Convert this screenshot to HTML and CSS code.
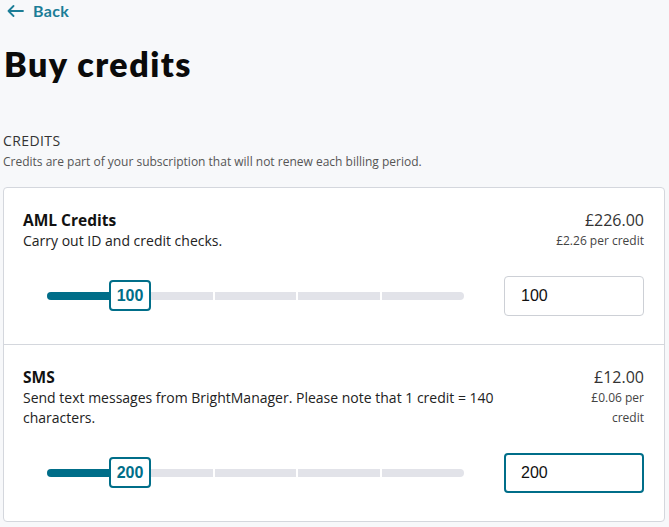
FILE: index.html
```html
<!DOCTYPE html>
<html lang="en">
<head>
<meta charset="utf-8">
<title>Buy credits</title>
<link rel="stylesheet" href="styles.css">
</head>
<body>
<div class="page">
  <a class="back" href="#">
    <svg class="back-icon" width="17" height="12" viewBox="0 0 17 12" aria-hidden="true">
      <path d="M16 6H1.5M6.5 1L1.5 6l5 5" fill="none" stroke="currentColor" stroke-width="1.8" stroke-linecap="round" stroke-linejoin="round"/>
    </svg>
    <span>Back</span>
  </a>
  <h1 class="title">Buy credits</h1>
  <div class="label">CREDITS</div>
  <p class="subtitle">Credits are part of your subscription that will not renew each billing period.</p>

  <div class="card">
    <section class="item">
      <div class="item-head">
        <div class="item-text">
          <div class="item-name">AML Credits</div>
          <div class="item-desc">Carry out ID and credit checks.</div>
        </div>
        <div class="item-price">
          <div class="price">£226.00</div>
          <div class="per">£2.26 per credit</div>
        </div>
      </div>
      <div class="item-controls">
        <div class="slider">
          <div class="track">
            <span class="seg"></span><span class="seg"></span><span class="seg"></span><span class="seg"></span><span class="seg"></span>
          </div>
          <div class="fill"></div>
          <div class="thumb">100</div>
        </div>
        <div class="input">100</div>
      </div>
    </section>
    <section class="item">
      <div class="item-head">
        <div class="item-text">
          <div class="item-name">SMS</div>
          <div class="item-desc">Send text messages from BrightManager. Please note that 1 credit = 140 characters.</div>
        </div>
        <div class="item-price">
          <div class="price">£12.00</div>
          <div class="per">£0.06 per credit</div>
        </div>
      </div>
      <div class="item-controls">
        <div class="slider">
          <div class="track">
            <span class="seg"></span><span class="seg"></span><span class="seg"></span><span class="seg"></span><span class="seg"></span>
          </div>
          <div class="fill"></div>
          <div class="thumb">200</div>
        </div>
        <div class="input focused">200</div>
      </div>
    </section>
  </div>
</div>
</body>
</html>
```
FILE: styles.css
```css
* { box-sizing: border-box; }
html, body { margin: 0; padding: 0; }
body {
  background: #f7f8fa;
  font-family: "Open Sans", "Noto Sans", sans-serif;
  color: #222;
  width: 669px;
  height: 527px;
  overflow: hidden;
}
.page {
  padding: 0 4px 0 3px;
}
.back {
  display: flex;
  align-items: center;
  gap: 9px;
  height: 20px;
  padding-left: 4px;
  color: #1b7d97;
  text-decoration: none;
  font-family: "Lato", sans-serif;
  font-weight: 700;
  font-size: 16px;
  letter-spacing: 0.3px;
}
.back-icon { display: block; margin-top: 2px; }
.title {
  margin: 24px 0 0 1px;
  font-family: "Lato", sans-serif;
  font-weight: 800;
  font-size: 34px;
  line-height: 40px;
  letter-spacing: 1.5px;
  color: #0b0b0b;
}
.label {
  margin-top: 47px;
  font-size: 14px;
  line-height: 20px;
  color: #333;
  letter-spacing: 0.4px;
}
.subtitle {
  margin: 2px 0 0 0;
  font-size: 12px;
  line-height: 18px;
  color: #555;
}
.card {
  margin-top: 16px;
  background: #fff;
  border: 1px solid #d4d7dd;
  border-radius: 4px;
}
.item {
  padding: 22px 20px 28px 19px;
}
.item + .item {
  border-top: 1px solid #d4d7dd;
}
.item-head {
  display: flex;
  justify-content: space-between;
  gap: 24px;
}
.item-name {
  font-size: 15.5px;
  font-weight: 700;
  line-height: 20px;
  color: #111;
}
.item-desc {
  margin-top: 1px;
  font-size: 14px;
  line-height: 20px;
  color: #222;
}
.item-price {
  text-align: right;
}
.price {
  font-size: 16px;
  line-height: 20px;
  color: #333;
}
.per {
  margin-top: 1px;
  font-size: 12px;
  line-height: 20px;
  color: #444;
}
.item-controls {
  display: flex;
  align-items: center;
  margin-top: 25px;
}
.slider {
  position: relative;
  flex: 1;
  margin: 0 40px 0 24px;
  height: 40px;
  display: flex;
  align-items: center;
}
.track {
  display: flex;
  gap: 2px;
  width: 100%;
  height: 8px;
  border-radius: 4px;
  overflow: hidden;
}
.seg {
  flex: 1;
  background: #e2e3e9;
}
.fill {
  position: absolute;
  left: 0;
  top: 16px;
  width: 80px;
  height: 8px;
  border-radius: 4px;
  background: #006e89;
}
.thumb {
  position: absolute;
  left: 62px;
  top: 4px;
  width: 42px;
  height: 31px;
  background: #fff;
  border: 2px solid #006e89;
  border-radius: 4px;
  color: #006e89;
  font-family: "Liberation Sans", Arial, sans-serif;
  font-weight: 700;
  font-size: 16px;
  display: flex;
  align-items: center;
  justify-content: center;
}
.input {
  width: 140px;
  height: 40px;
  border: 1px solid #cdd0d6;
  border-radius: 4px;
  padding: 0 16px;
  display: flex;
  align-items: center;
  font-family: "Liberation Sans", Arial, sans-serif;
  font-size: 16px;
  color: #111;
  background: #fff;
}
.input.focused {
  border: 2px solid #006e89;
  padding: 0 15px;
}
```
